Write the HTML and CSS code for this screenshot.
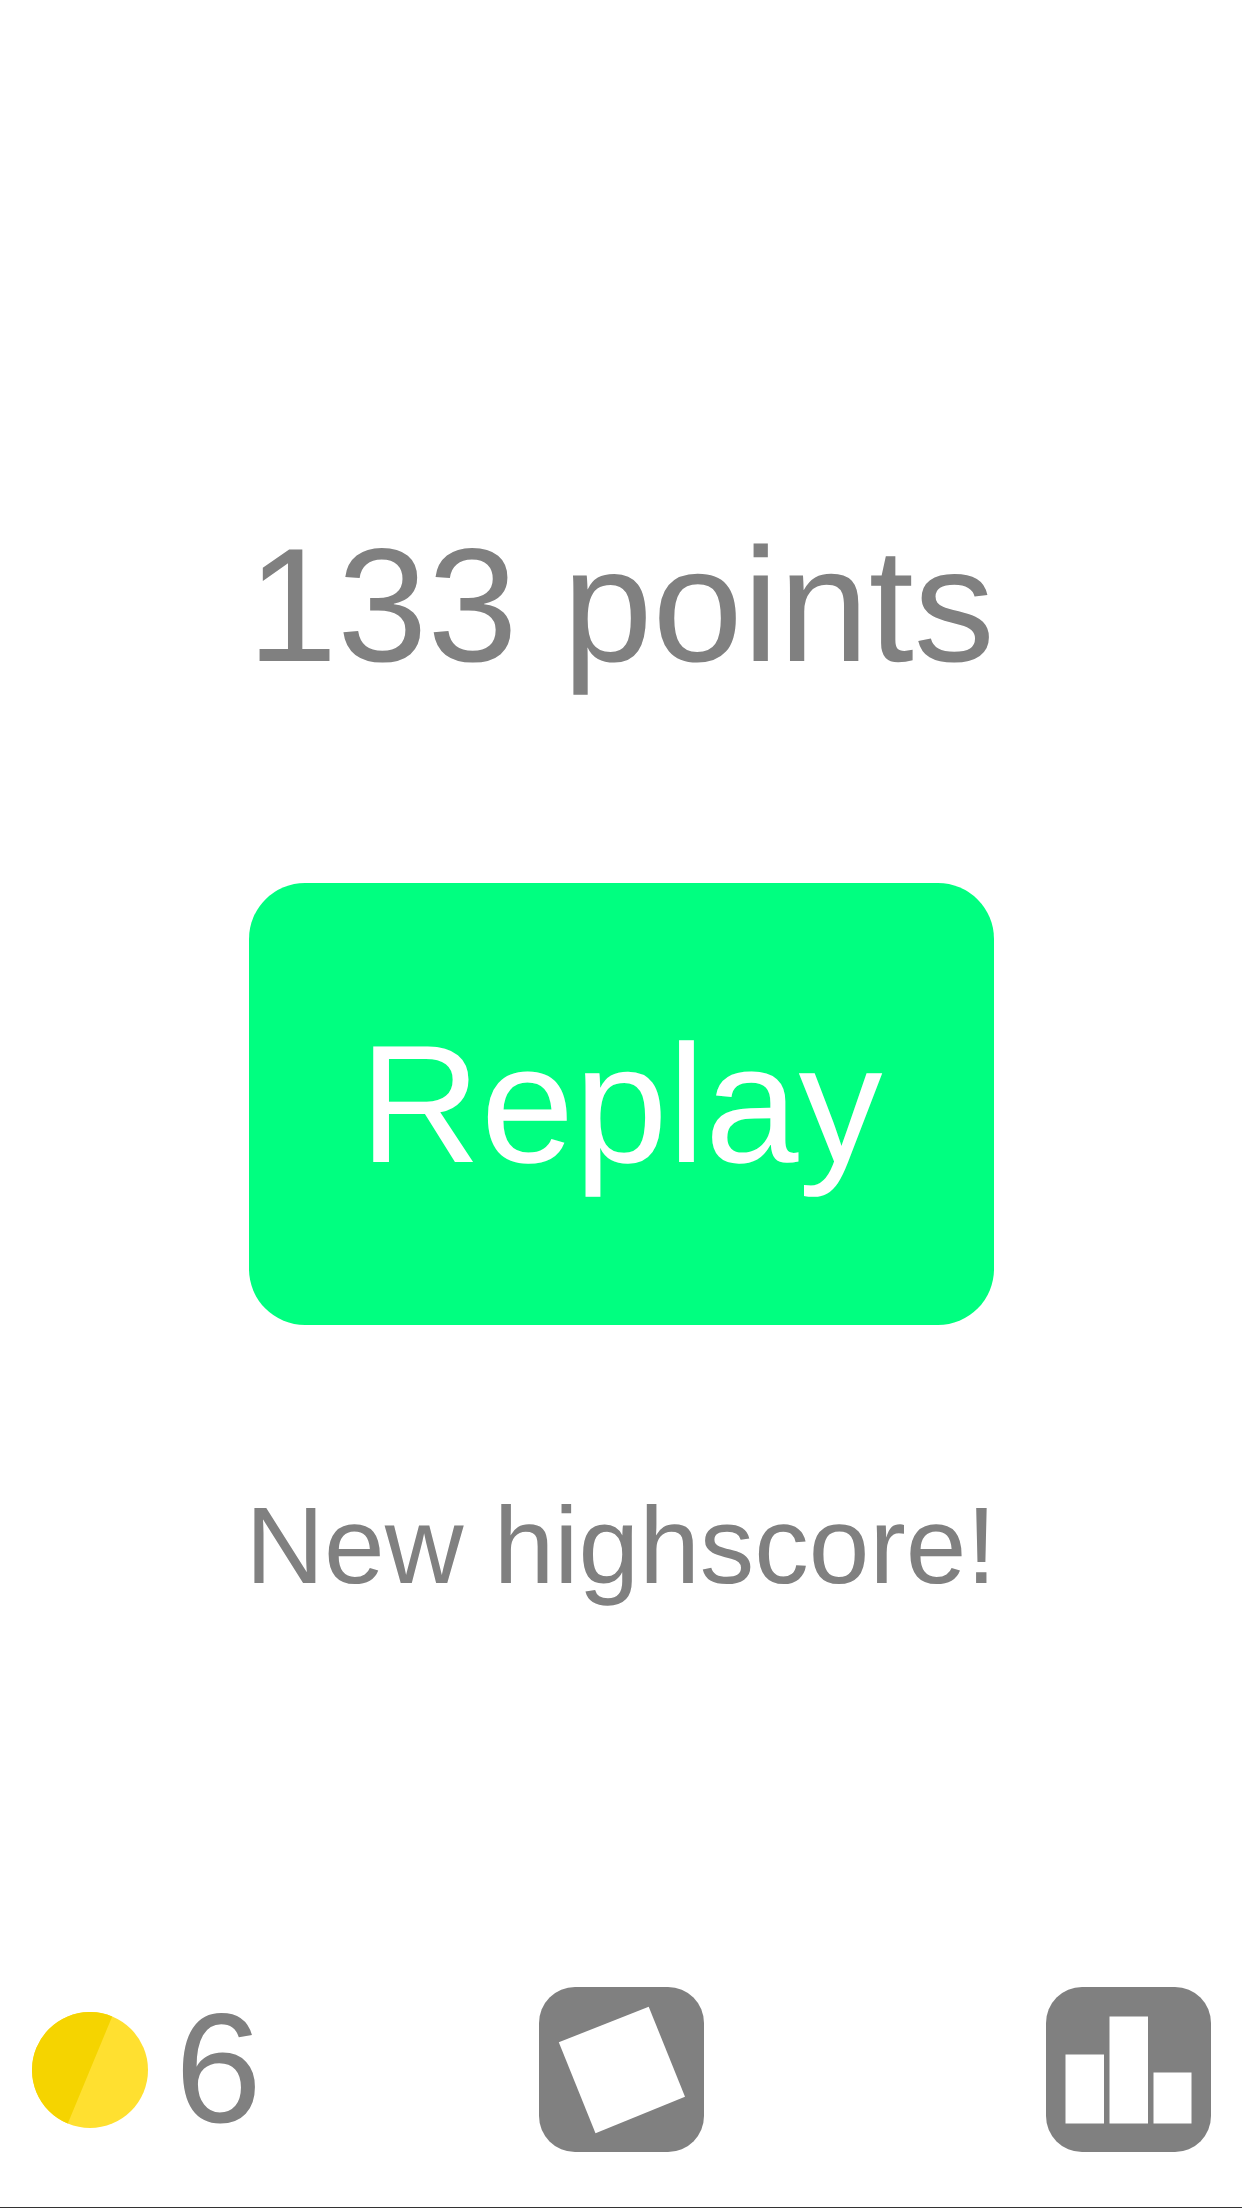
FILE: index.html
```html
<!DOCTYPE html>
<html lang="en">
<head>
<meta charset="utf-8">
<title>Game over</title>
<link rel="stylesheet" href="styles.css">
</head>
<body>
<main class="screen">
  <section class="result">
    <h1 class="score">133 points</h1>
    <button class="replay" type="button">Replay</button>
    <p class="highscore">New highscore!</p>
  </section>
  <footer class="bar">
    <div class="coins">
      <svg class="coin" viewBox="0 0 116 116" aria-hidden="true">
        <circle cx="58" cy="58" r="58" fill="#ffe030"/>
        <path d="M80.2 4.4 L35.8 111.6 A58 58 0 0 1 80.2 4.4 Z" fill="#f5d400"/>
      </svg>
      <span class="count">6</span>
    </div>
    <button class="tile" type="button" aria-label="Skins">
      <svg class="tile-art" viewBox="0 0 165 165" aria-hidden="true">
        <rect width="165" height="165" rx="36" fill="#808080"/>
        <polygon points="109.7,19.7 146,109.7 56.5,146.3 19.8,55.3" fill="#fff"/>
      </svg>
    </button>
    <button class="tile tile-end" type="button" aria-label="Leaderboard">
      <svg class="tile-art" viewBox="0 0 165 165" aria-hidden="true">
        <rect width="165" height="165" rx="36" fill="#808080"/>
        <rect x="19.5" y="67.5" width="38.5" height="69" fill="#fff"/>
        <rect x="63.5" y="29.5" width="38.5" height="107" fill="#fff"/>
        <rect x="107.5" y="85.5" width="38" height="51" fill="#fff"/>
      </svg>
    </button>
  </footer>
</main>
</body>
</html>
```

FILE: styles.css
```css
* {
  box-sizing: border-box;
}

html,
body {
  margin: 0;
  padding: 0;
  background: #fff;
}

.screen {
  display: flex;
  flex-direction: column;
  justify-content: space-between;
  width: 1242px;
  height: 2208px;
  border-bottom: 1px solid #333;
  font-family: "Liberation Sans", Arial, sans-serif;
  color: #808080;
  text-rendering: geometricPrecision;
}

.result {
  display: flex;
  flex-direction: column;
  align-items: center;
  padding-top: 514px;
}

.score {
  margin: 0;
  font-size: 162px;
  font-weight: 400;
  line-height: 184px;
}

.replay {
  width: 745px;
  height: 442px;
  margin-top: 185px;
  padding: 0;
  border: 0;
  border-radius: 56px;
  background: #00ff80;
  color: #fff;
  font: inherit;
  font-size: 168px;
  text-rendering: geometricPrecision;
}

.highscore {
  margin: 160px 0 0;
  font-size: 109px;
  line-height: 123px;
}

.bar {
  display: grid;
  grid-template-columns: 1fr auto 1fr;
  align-items: center;
  padding: 0 31px 55px;
}

.coins {
  display: flex;
  align-items: center;
  gap: 27px;
  padding-left: 1px;
}

.coin {
  display: block;
  width: 116px;
  height: 116px;
}

.count {
  font-size: 156px;
  line-height: 165px;
}

.tile {
  display: block;
  width: 165px;
  height: 165px;
  padding: 0;
  border: 0;
  background: none;
}

.tile-end {
  justify-self: end;
}

.tile-art {
  display: block;
  width: 165px;
  height: 165px;
}
```
